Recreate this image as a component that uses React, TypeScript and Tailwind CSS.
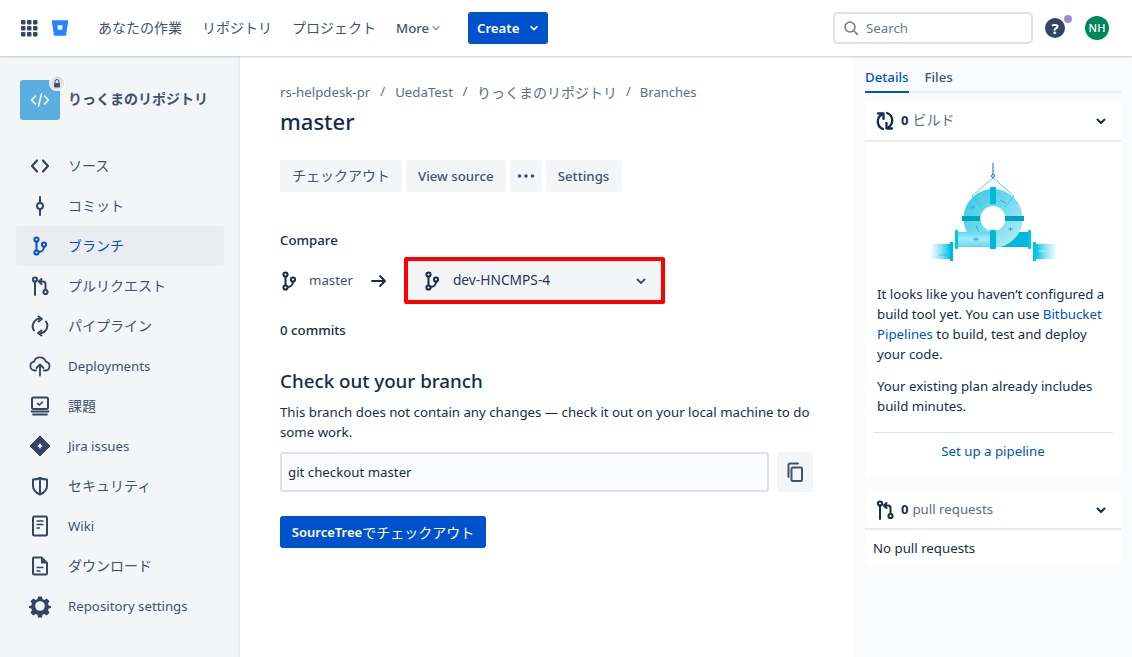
import React from "react";

const Ic = ({ children, className = "", size = 24 }: { children: React.ReactNode; className?: string; size?: number }) => (
  <svg width={size} height={size} viewBox="0 0 24 24" fill="none" className={className}>{children}</svg>
);

const Chevron = ({ className = "" }: { className?: string }) => (
  <svg width="24" height="24" viewBox="0 0 24 24" fill="none" className={className}>
    <path d="M8.500 10.500 12 14l3.500-3.500" stroke="currentColor" strokeWidth="2" strokeLinecap="round" strokeLinejoin="round" />
  </svg>
);

const BranchIcon = () => (
  <Ic>
    <circle cx="8.500" cy="5.500" r="2.100" stroke="currentColor" strokeWidth="2" />
    <circle cx="8.500" cy="18.500" r="2.100" stroke="currentColor" strokeWidth="2" />
    <circle cx="16" cy="10.500" r="2.100" stroke="currentColor" strokeWidth="2" />
    <path d="M8.500 7.500v9M10.500 18c3 0 5.500-2 5.500-5.500" stroke="currentColor" strokeWidth="2" />
  </Ic>
);
const PrIcon = () => (
  <Ic>
    <circle cx="7" cy="5.500" r="2.100" stroke="currentColor" strokeWidth="2" />
    <circle cx="17.500" cy="18" r="2.100" stroke="currentColor" strokeWidth="2" />
    <path d="M7 7.500V21M17.500 16v-6c0-1.500-1-2.500-2.500-2.500h-3.500M13.500 5l-2.700 2.500 2.700 2.500" stroke="currentColor" strokeWidth="2" strokeLinecap="round" strokeLinejoin="round" />
  </Ic>
);
const RefreshIcon = () => (
  <Ic>
    <path d="M6 16.500A7.500 7.500 0 0 1 11.500 4.800M18 7.500A7.500 7.500 0 0 1 12.500 19.200" stroke="currentColor" strokeWidth="2" strokeLinecap="round" />
    <path d="M10.500 2.500 14 5l-3.500 2.500M13.500 16.500 10 19l3.500 2.500" stroke="currentColor" strokeWidth="2" strokeLinecap="round" strokeLinejoin="round" />
  </Ic>
);
const BuildIcon = () => (
  <Ic>
    <path d="M10 20C6.800 18.800 4.700 15.800 4.800 12.300 4.900 9.500 6.400 7 8.800 5.500" stroke="currentColor" strokeWidth="2.300" strokeLinecap="round" />
    <path d="M14 4C17.200 5.200 19.300 8.200 19.200 11.700 19.100 14.500 17.600 17 15.200 18.500" stroke="currentColor" strokeWidth="2.300" strokeLinecap="round" />
    <path d="M5 4.500h5.500V10M19 19.500h-5.500V14" stroke="currentColor" strokeWidth="2.300" strokeLinecap="round" strokeLinejoin="round" />
  </Ic>
);

const navItems: { label: string; icon: React.ReactNode; active?: boolean; latin?: boolean }[] = [
  { label: "ソース", icon: <Ic><path d="M9 6.500 4 12l5 5.500M15 6.500l5 5.500-5 5.500" stroke="currentColor" strokeWidth="2.200" strokeLinecap="round" strokeLinejoin="round" /></Ic> },
  { label: "コミット", icon: <Ic><circle cx="12" cy="12" r="3" stroke="currentColor" strokeWidth="2" /><path d="M12 3v6M12 15v6" stroke="currentColor" strokeWidth="2" strokeLinecap="round" /></Ic> },
  { label: "ブランチ", icon: <BranchIcon />, active: true },
  { label: "プルリクエスト", icon: <PrIcon /> },
  { label: "パイプライン", icon: <RefreshIcon /> },
  { label: "Deployments", latin: true, icon: <Ic><path d="M8 16.500H6.500a4.500 4.500 0 0 1-.5-8.900 6.200 6.200 0 0 1 11.800 0 4.500 4.500 0 0 1-.3 8.900H16" stroke="currentColor" strokeWidth="1.800" strokeLinecap="round" /><path d="M12 21.500V11M8.500 14l3.500-3.500 3.500 3.500" stroke="currentColor" strokeWidth="1.800" strokeLinecap="round" strokeLinejoin="round" /></Ic> },
  { label: "課題", icon: <Ic><rect x="4" y="3.500" width="16" height="11.500" rx="1.500" stroke="currentColor" strokeWidth="2" /><path d="m9.500 9.500 2 1.500 3-3" stroke="currentColor" strokeWidth="1.600" strokeLinecap="round" strokeLinejoin="round" /><path d="M3.500 17.500h17M5 20.500h14" stroke="currentColor" strokeWidth="1.800" strokeLinecap="round" /></Ic> },
  { label: "Jira issues", latin: true, icon: <Ic><path d="M12 2 22 12 12 22 2 12z" fill="currentColor" stroke="currentColor" strokeWidth="1" strokeLinejoin="round" /><path d="M12 8.500c.2 2 1.500 3.300 3.500 3.500-2 .2-3.300 1.500-3.500 3.500-.2-2-1.500-3.300-3.500-3.500 2-.2 3.300-1.500 3.500-3.500z" fill="#F4F5F7" /></Ic> },
  { label: "セキュリティ", icon: <Ic><path d="M12 4c2.500 1.300 4.800 1.500 7 1.500v6c0 4.500-3 7.300-7 9-4-1.700-7-4.500-7-9v-6c2.200 0 4.500-.2 7-1.500z" stroke="currentColor" strokeWidth="2" strokeLinejoin="round" /><path d="M12 5v15" stroke="currentColor" strokeWidth="2" /></Ic> },
  { label: "Wiki", latin: true, icon: <Ic><rect x="5" y="2.500" width="14" height="19" rx="1.500" stroke="currentColor" strokeWidth="2" /><path d="M8.500 7h7M8.500 10.500h7M8.500 14H12" stroke="currentColor" strokeWidth="1.700" /></Ic> },
  { label: "ダウンロード", icon: <Ic><path d="M6 3.500h7.500L19 9v10.500a1 1 0 0 1-1 1H6a1 1 0 0 1-1-1v-15a1 1 0 0 1 1-1z" stroke="currentColor" strokeWidth="2" strokeLinejoin="round" /><path d="M13 4v5.500h5.500" fill="currentColor" /><path d="M8.500 13.500h7M8.500 17h4" stroke="currentColor" strokeWidth="1.700" /></Ic> },
  { label: "Repository settings", latin: true, icon: <Ic><path d="M10 2.500h4l.6 2.800 1.700.7 2.400-1.500 2.800 2.800-1.500 2.400.7 1.700 2.300.6v2l-2.300.6-.7 1.700 1.500 2.400-2.800 2.800-2.400-1.500-1.700.7-.6 2.800h-4l-.6-2.800-1.700-.7-2.400 1.500-2.800-2.800 1.500-2.400-.7-1.700-2.300-.6v-2l2.300-.6.7-1.700-1.500-2.400 2.800-2.800 2.400 1.500 1.700-.7z" fill="currentColor" /><circle cx="12" cy="12" r="4.800" fill="#F4F5F7" /></Ic> },
];

const Illustration = () => (
  <svg width="128" height="100" viewBox="0 0 128 100" className="block">
    <defs>
      <linearGradient id="fadeL" x1="0" x2="1"><stop offset="0" stopColor="#fff" /><stop offset=".55" stopColor="#8FE3F1" /><stop offset="1" stopColor="#00C7E6" /></linearGradient>
      <linearGradient id="fadeR" x1="1" x2="0"><stop offset="0" stopColor="#fff" /><stop offset=".55" stopColor="#8FE3F1" /><stop offset="1" stopColor="#00C7E6" /></linearGradient>
      <linearGradient id="ring" x1="0" x2="1" y1="0" y2="1"><stop offset="0" stopColor="#3FCDE4" /><stop offset=".55" stopColor="#79DDEE" /><stop offset="1" stopColor="#A8E8F4" /></linearGradient>
      <linearGradient id="pipe" x1="0" x2="0" y1="0" y2="1"><stop offset="0" stopColor="#5ADAEE" /><stop offset=".45" stopColor="#A8E9F5" /><stop offset="1" stopColor="#62DBEF" /></linearGradient>
    </defs>
    <path d="M64 0v11" stroke="#2684FF" strokeWidth="1.200" />
    <circle cx="64" cy="13" r="1.500" fill="none" stroke="#0065FF" strokeWidth="1" />
    <path d="M64 15 43 33M64 15l21 18" stroke="#4FD6EC" strokeWidth="1" fill="none" />
    <path d="M62 84h38V69H89z" fill="#00B8D9" />
    <circle cx="64" cy="55.500" r="21" fill="none" stroke="url(#ring)" strokeWidth="17" />
    <path d="M43 33l9 11M85 33 76 44" stroke="#2CCCE4" strokeWidth="1" />
    <path d="M47 62a18 18 0 0 0 9 12" stroke="#4C9AFF" strokeWidth="1" fill="none" />
    <path d="M71 37l6 3" stroke="#4C9AFF" strokeWidth="1" fill="none" />
    <path d="M41 44h5M43.500 42v4M79 66h5M81.500 64v4" stroke="#4C9AFF" strokeWidth="1" />
    <rect x="61" y="24" width="6" height="17" rx="1" fill="#00B8D9" />
    <rect x="33" y="53" width="18" height="5" fill="#00A3BF" />
    <rect x="76" y="53" width="19" height="5" fill="#00A3BF" />
    <rect x="28" y="69" width="34" height="15" fill="url(#pipe)" />
    <path d="M44 76h6M47 74v4" stroke="#4C9AFF" strokeWidth="1" />
    <rect x="26" y="67" width="3" height="19" rx="1" fill="#00C7E6" />
    <rect x="61" y="67" width="6" height="19" rx="1" fill="#00B8D9" />
    <rect x="99" y="67" width="3" height="19" rx="1" fill="#00C7E6" />
    <rect x="1" y="81" width="20" height="15" fill="url(#fadeL)" />
    <path d="M10 92h8" stroke="#4C9AFF" strokeWidth="1" opacity=".6" />
    <rect x="21" y="79" width="3" height="19" fill="#00B8D9" />
    <rect x="107" y="81" width="21" height="15" fill="url(#fadeR)" />
    <path d="M110 88h8" stroke="#BDEFF8" strokeWidth="1" />
    <rect x="104" y="79" width="3" height="19" fill="#00C7E6" />
  </svg>
);

export default function App() {
  return (
    <div className="w-[1132px] h-[657px] overflow-hidden bg-white text-[14px] text-[#172B4D] font-['Noto_Sans','Noto_Sans_CJK_JP',sans-serif]">
      <header className="relative z-10 h-14 flex items-center bg-white shadow-[0_1px_2px_rgba(9,30,66,0.22)] pl-5 pr-[23px]">
        <svg width="20" height="20" viewBox="0 0 20 20" className="text-[#344563] shrink-0 mr-[11px]" fill="currentColor">
          {[0, 6, 12].flatMap((y) => [0, 6, 12].map((x) => <rect key={`${x}-${y}`} x={x + 1} y={y + 2} width="4.500" height="4.500" rx="1" />))}
        </svg>
        <svg width="18" height="18" viewBox="0 0 20 20" className="shrink-0 mr-[29px]">
          <path d="M1.500 1.500h17a.6.6 0 0 1 .6.7l-2.300 15.600a.9.9 0 0 1-.9.7H4.100a.9.9 0 0 1-.9-.7L.9 2.200a.6.6 0 0 1 .6-.7z" fill="#2684FF" />
          <path d="M7 7h6l-.7 5H7.700z" fill="#fff" />
        </svg>
        <nav className="flex items-center gap-5 text-[#42526E]">
          <span className="pb-[2px]">あなたの作業</span>
          <span className="pb-[2px]">リポジトリ</span>
          <span className="pb-[2px]">プロジェクト</span>
          <span className="flex items-center font-medium text-[13.250px] pt-[2px]">More<Chevron className="-ml-[3px] -mr-1 text-[#97A0AF] w-5 h-5 -mt-[2px]" /></span>
        </nav>
        <button className="ml-[26px] h-8 w-20 rounded-[3px] bg-[#0052CC] text-white text-[13.250px] font-semibold flex items-center justify-center pl-1 pt-[2px]">Create<Chevron className="w-5 h-5 ml-1 -mt-[2px]" /></button>
        <div className="ml-auto w-[200px] h-8 rounded-[5px] border-2 border-[#DFE1E6] flex items-center pl-2 text-[13.250px] text-[#6B778C]">
          <svg width="16" height="16" viewBox="0 0 16 16" fill="none" className="mr-[7px]"><circle cx="7" cy="7" r="5" stroke="#6B778C" strokeWidth="1.500" /><path d="m11 11 3.500 3.500" stroke="#6B778C" strokeWidth="1.500" strokeLinecap="round" /></svg>
          <span className="pt-[2px]">Search</span>
        </div>
        <div className="relative ml-3 w-5 h-5 rounded-full bg-[#344563] text-white flex items-center justify-center text-[15px] font-bold leading-none">
          ?
          <span className="absolute -top-[3px] -right-[7px] w-2 h-2 rounded-full bg-[#998DD9]" />
        </div>
        <div className="ml-5 w-6 h-6 rounded-full bg-[#00875A] text-white text-[11px] font-medium flex items-center justify-center">NH</div>
      </header>

      <div className="flex h-[601px]">
        <aside className="w-[240px] shrink-0 bg-[#F4F5F7] border-r-2 border-[#EBECF0] pt-6">
          <div className="flex items-center pl-5 h-10 mb-[26px]">
            <div className="relative w-10 h-10 rounded-[3px] bg-[#5AAFE0] flex items-center justify-center text-white">
              <svg width="24" height="24" viewBox="0 0 24 24" fill="none"><path d="M7.500 8 3.500 12l4 4M16.500 8l4 4-4 4M13.500 6l-3 12" stroke="currentColor" strokeWidth="1.500" strokeLinecap="round" strokeLinejoin="round" /></svg>
              <span className="absolute -top-1 -right-1 w-[14px] h-[14px] rounded-full bg-[#DFE1E6] ring-1 ring-white flex items-center justify-center">
                <svg width="8" height="9" viewBox="0 0 8 9"><path d="M2 4V2.500a2 2 0 0 1 4 0V4" stroke="#42526E" fill="none" /><rect x="1" y="4" width="6" height="4.500" rx="1" fill="#42526E" /></svg>
              </span>
            </div>
            <span className="ml-2 pb-[3px] font-semibold text-[#42526E]">りっくまのリポジトリ</span>
          </div>
          <nav className="pl-4 pr-[14px] flex flex-col">
            {navItems.map((it) => (
              <div key={it.label} className={`h-10 shrink-0 flex items-center rounded-[3px] pl-3 ${it.active ? "bg-[#EBECF0] text-[#0052CC]" : "text-[#42526E]"}`}>
                <span className={`w-6 h-6 shrink-0 ${it.active ? "text-[#0052CC]" : "text-[#344563]"}`}>{it.icon}</span>
                <span className={`ml-4 ${it.latin ? "text-[13.250px] pt-[2px]" : "pb-[2px]"}`}>{it.label}</span>
              </div>
            ))}
          </nav>
        </aside>

        <main className="w-[615px] shrink-0 pl-10 pr-[42px] pt-[25px] text-[#172B4D]">
          <div className="flex items-center text-[13.250px] h-[22px] text-[#5E6C84]">
            <span className="pt-[2px]">rs-helpdesk-pr</span><span className="mx-[10px]">/</span>
            <span className="pt-[2px]">UedaTest</span><span className="mx-[9.500px]">/</span>
            <span className="text-[14px]">りっくまのリポジトリ</span><span className="mx-[9px]">/</span>
            <span className="pt-[2px] text-[13px]">Branches</span>
          </div>
          <h1 className="text-[22px] leading-8 font-medium mt-[2px] text-[#172B4D]">master</h1>
          <div className="flex gap-1 mt-[23px] text-[#42526E]">
            <button className="h-8 px-3 pb-[2px] rounded-[3px] bg-[#F4F5F7]">チェックアウト</button>
            <button className="h-8 px-3 pt-[2px] rounded-[3px] bg-[#F4F5F7] text-[13.250px] font-medium">View source</button>
            <button className="h-8 w-8 rounded-[3px] bg-[#F4F5F7] flex items-center justify-center">
              <svg width="20" height="6" viewBox="0 0 20 6" fill="currentColor"><circle cx="3.500" cy="3" r="1.800" /><circle cx="10" cy="3" r="1.800" /><circle cx="16.500" cy="3" r="1.800" /></svg>
            </button>
            <button className="h-8 w-[76px] pt-[2px] rounded-[3px] bg-[#F4F5F7] text-[13.250px] font-medium">Settings</button>
          </div>
          <div className="mt-[38px] text-[13.250px] font-medium leading-5">Compare</div>
          <div className="flex items-center mt-[7px] h-[47px]">
            <span className="w-6 h-6 -ml-[3px] text-[#172B4D]"><BranchIcon /></span>
            <span className="ml-[8px] text-[13.250px] text-[#42526E]">master</span>
            <svg width="20" height="20" viewBox="0 0 20 20" fill="none" className="ml-[16px]"><path d="M3 10h13M11 5l5 5-5 5" stroke="#172B4D" strokeWidth="1.800" strokeLinecap="round" strokeLinejoin="round" /></svg>
            <div className="ml-[15px] w-[261px] h-[47px] border-4 border-[#FF0000] rounded-[2px] bg-[#F4F5F7] flex items-center pl-3 pr-[8px]">
              <span className="w-6 h-6 text-[#172B4D]"><BranchIcon /></span>
              <span className="ml-[9px] text-[#253858] text-[13.750px]">dev-HNCMPS-4</span>
              <Chevron className="ml-auto text-[#42526E]" />
            </div>
          </div>
          <div className="mt-4 text-[13.250px] font-medium leading-5">0 commits</div>
          <h2 className="mt-[29px] text-[18.750px] font-medium leading-6">Check out your branch</h2>
          <p className="mt-[9px] text-[13.250px] leading-5 text-[#172B4D]">This branch does not contain any changes — check it out on your local machine to do some work.</p>
          <div className="flex gap-2 mt-[10px]">
            <div className="flex-1 h-10 border-2 border-[#DFE1E6] rounded-[3px] bg-[#FAFBFC] flex items-center px-1.5 pt-[2px] text-[13.250px]">git checkout master</div>
            <button className="w-9 h-10 rounded-[3px] bg-[#F4F5F7] flex items-center justify-center text-[#42526E]">
              <svg width="24" height="24" viewBox="0 0 24 24" fill="none"><rect x="8.500" y="7.500" width="10.500" height="13.500" rx="1.500" stroke="currentColor" strokeWidth="2" /><path d="M15 3.500H7A1.500 1.500 0 0 0 5.500 5v12" stroke="currentColor" strokeWidth="2" strokeLinecap="round" /></svg>
            </button>
          </div>
          <button className="mt-6 h-8 w-[206px] rounded-[3px] bg-[#0052CC] text-white flex items-center justify-center pt-[1px]"><span className="font-semibold text-[13px]">SourceTree</span><span>でチェックアウト</span></button>
        </main>

        <aside className="flex-1 bg-[#FAFBFC] pl-[10px] pr-[11px] pt-[10px]">
          <div className="flex gap-4 border-b-2 border-[#EBECF0] h-[27px] text-[13.250px] font-medium">
            <span className="h-[27px] leading-[22px] border-b-2 border-[#0052CC] text-[#0052CC]">Details</span>
            <span className="leading-[22px] text-[#42526E]">Files</span>
          </div>
          <section className="mt-[8px] bg-white rounded-[3px] h-[376px] flex flex-col">
            <div className="h-[41px] shrink-0 flex items-center border-b-2 border-[#EBECF0] px-2 text-[#172B4D]">
              <BuildIcon />
              <span className="ml-1 font-bold text-[13px]">0</span>
              <span className="ml-1 pb-[2px] text-[#5E6C84]">ビルド</span>
              <Chevron className="ml-auto text-[#172B4D]" />
            </div>
            <div className="flex justify-center mt-[21px]"><Illustration /></div>
            <div className="px-3 mt-[21px] text-[13.250px] leading-5 text-[#172B4D]">
              <p>It looks like you haven’t configured a build tool yet. You can use <span className="text-[#0052CC]">Bitbucket Pipelines</span> to build, test and deploy your code.</p>
              <p className="mt-3">Your existing plan already includes build minutes.</p>
            </div>
            <div className="mx-2 mt-[16px] border-t border-[#DFE1E6] pt-[8px] text-center text-[13.250px] leading-5 text-[#0052CC]">Set up a pipeline</div>
          </section>
          <section className="mt-[12px] bg-white rounded-[3px] h-[77px]">
            <div className="h-[41px] pt-[2px] flex items-center border-b-2 border-[#EBECF0] px-2 text-[#172B4D]">
              <PrIcon />
              <span className="ml-1 font-bold text-[13px]">0</span>
              <span className="ml-1 text-[13.250px] text-[#5E6C84]">pull requests</span>
              <Chevron className="ml-auto text-[#172B4D]" />
            </div>
            <div className="px-2 mt-[8px] text-[13.250px] leading-5 text-[#172B4D]">No pull requests</div>
          </section>
        </aside>
      </div>
    </div>
  );
}
